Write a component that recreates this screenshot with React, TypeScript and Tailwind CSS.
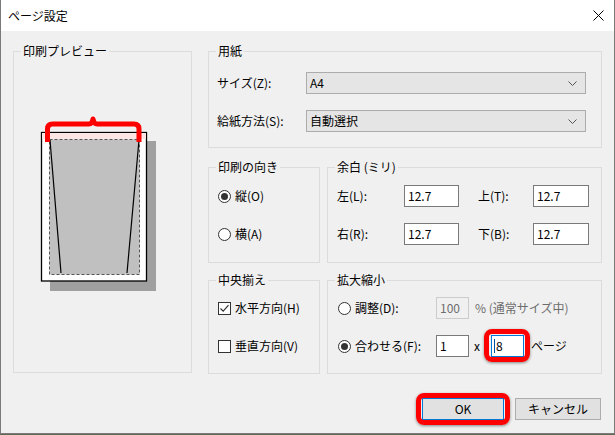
import type { ReactNode } from 'react';

function Group({ label, className, children }: { label: string; className: string; children?: ReactNode }) {
  return (
    <fieldset className={`m-0 min-w-0 border border-[#dcdcdc] p-0 ${className}`}>
      <legend className="ml-[7px] px-[2px] text-[12px] leading-[16px]">{label}</legend>
      {children}
    </fieldset>
  );
}

function Radio({ checked }: { checked?: boolean }) {
  return (
    <span className="flex h-[13px] w-[13px] shrink-0 items-center justify-center rounded-full border border-[#333333] bg-white">
      {checked && <span className="h-[7px] w-[7px] rounded-full bg-[#333333]" />}
    </span>
  );
}

function Check({ checked }: { checked?: boolean }) {
  return (
    <span className="flex h-[13px] w-[13px] shrink-0 items-center justify-center border border-[#333333] bg-white">
      {checked && (
        <svg width="11" height="11" viewBox="0 0 11 11">
          <polyline points="1.5,5.5 4.2,8.2 9.5,2.2" fill="none" stroke="#333" strokeWidth="1.2" />
        </svg>
      )}
    </span>
  );
}

function Select({ value }: { value: string }) {
  return (
    <div className="flex h-[22px] w-[280px] items-center justify-between border border-[#acacac] bg-[#e5e5e5] pl-[3px] pr-[8px]">
      <span>{value}</span>
      <svg width="9" height="5" viewBox="0 0 9 5">
        <polyline points="0.5,0.5 4.5,4.5 8.5,0.5" fill="none" stroke="#555" strokeWidth="1" />
      </svg>
    </div>
  );
}

function Field({ value, className }: { value: string; className: string }) {
  return (
    <div className={`flex h-[22px] items-center border border-[#7a7a7a] bg-white pl-[3px] ${className}`}>{value}</div>
  );
}

function Highlight({ className }: { className: string }) {
  return (
    <span
      className={`pointer-events-none absolute rounded-[8px] border-[5px] border-[#ff0000] shadow-[0_1px_3px_rgba(0,0,0,0.45)] ${className}`}
    />
  );
}

function Preview() {
  return (
    <svg className="ml-[24px] mt-[56px] block" width="122" height="180" viewBox="0 0 122 180">
      <rect x="12" y="26" width="106" height="150" fill="#a0a0a0" />
      <rect x="3.5" y="17.5" width="105" height="148.5" fill="#fff" stroke="#000" strokeWidth="1.3" />
      <rect x="4" y="18" width="104" height="6" fill="#fbe5e5" />
      <rect
        x="11.5"
        y="24.5"
        width="90"
        height="135"
        fill="#c0c0c0"
        stroke="#555"
        strokeWidth="1"
        strokeDasharray="3 2"
      />
      <line x1="12" y1="25" x2="23" y2="158" stroke="#000" strokeWidth="1.2" />
      <line x1="101" y1="25" x2="89" y2="158" stroke="#000" strokeWidth="1.2" />
      <path
        d="M9.5 27 V14 Q9.5 9 14.5 9 H51 Q54 9 55 4 Q56 9 59 9 H96 Q101 9 101 14 V27"
        fill="none"
        stroke="#ff0000"
        strokeWidth="5"
        strokeLinejoin="round"
      />
    </svg>
  );
}

export default function App() {
  return (
    <div className="h-[435px] w-[615px] bg-[#5f6a55] font-['Noto_Sans_CJK_JP',sans-serif] text-[12px] text-black">
      <div className="flex h-[434px] w-[615px] flex-col border border-t-0 border-[#7a7a7a] bg-[#f0f0f0]">
        <div className="flex h-[31px] items-center justify-between bg-white pl-[7px] pr-[10px]">
          <span className="text-[12px]">ページ設定</span>
          <svg width="11" height="11" viewBox="0 0 11 11">
            <line x1="0.5" y1="0.5" x2="10.5" y2="10.5" stroke="#000" strokeWidth="1" />
            <line x1="10.5" y1="0.5" x2="0.5" y2="10.5" stroke="#000" strokeWidth="1" />
          </svg>
        </div>

        <div className="flex gap-[16px] pl-[12px] pt-[12px]">
          <Group label="印刷プレビュー" className="h-[330px] w-[179px]">
            <Preview />
          </Group>

          <div className="flex w-[394px] flex-col">
            <Group label="用紙" className="h-[105px] w-[394px]">
              <div className="mt-[13px] flex flex-col gap-[16px] pl-[8px]">
                <div className="flex items-center">
                  <span className="w-[89px]">サイズ(Z):</span>
                  <Select value="A4" />
                </div>
                <div className="flex items-center">
                  <span className="w-[89px]">給紙方法(S):</span>
                  <Select value="自動選択" />
                </div>
              </div>
            </Group>

            <div className="mt-[11px] flex gap-[7px]">
              <Group label="印刷の向き" className="h-[104px] w-[112px]">
                <div className="mt-[10px] flex flex-col gap-[16px] pl-[9px]">
                  <div className="flex h-[22px] items-center gap-[4px]">
                    <Radio checked />
                    <span>縦(O)</span>
                  </div>
                  <div className="flex h-[22px] items-center gap-[4px]">
                    <Radio />
                    <span>横(A)</span>
                  </div>
                </div>
              </Group>
              <Group label="余白 (ミリ)" className="h-[104px] w-[275px]">
                <div className="mt-[10px] flex flex-col gap-[16px] pl-[9px]">
                  <div className="flex items-center">
                    <span className="w-[67px]">左(L):</span>
                    <Field value="12.7" className="w-[55px]" />
                    <span className="ml-[19px] w-[55px]">上(T):</span>
                    <Field value="12.7" className="w-[56px]" />
                  </div>
                  <div className="flex items-center">
                    <span className="w-[67px]">右(R):</span>
                    <Field value="12.7" className="w-[55px]" />
                    <span className="ml-[19px] w-[55px]">下(B):</span>
                    <Field value="12.7" className="w-[56px]" />
                  </div>
                </div>
              </Group>
            </div>

            <div className="mt-[9px] flex gap-[7px]">
              <Group label="中央揃え" className="h-[102px] w-[112px]">
                <div className="mt-[9px] flex flex-col gap-[16px] pl-[9px]">
                  <div className="flex h-[22px] items-center gap-[4px]">
                    <Check checked />
                    <span>水平方向(H)</span>
                  </div>
                  <div className="flex h-[22px] items-center gap-[4px]">
                    <Check />
                    <span>垂直方向(V)</span>
                  </div>
                </div>
              </Group>
              <Group label="拡大縮小" className="h-[102px] w-[275px]">
                <div className="mt-[9px] flex flex-col gap-[16px] pl-[10px]">
                  <div className="flex items-center">
                    <Radio />
                    <span className="ml-[4px] w-[81px]">調整(D):</span>
                    <div className="flex h-[22px] w-[33px] items-center border border-[#cccccc] bg-[#f0f0f0] pl-[3px] text-[#6d6d6d]">
                      100
                    </div>
                    <span className="ml-[6px] text-[#6d6d6d]">% (通常サイズ中)</span>
                  </div>
                  <div className="flex items-center">
                    <Radio checked />
                    <span className="ml-[4px] w-[81px]">合わせる(F):</span>
                    <Field value="1" className="w-[33px]" />
                    <span className="w-[22px] pl-[5px]">x</span>
                    <div className="relative">
                      <div className="flex h-[22px] w-[33px] items-center border border-[#0078d7] bg-white pl-[2px]">
                        <span className="mr-[1px] h-[14px] w-px bg-[#0050a0]" />8
                      </div>
                      <Highlight className="-bottom-[5px] -left-[7px] -right-[6px] -top-[6px]" />
                    </div>
                    <span className="ml-[7px]">ページ</span>
                  </div>
                </div>
              </Group>
            </div>

            <div className="mt-[24px] flex justify-end gap-[11px] pr-[1px]">
              <div className="relative">
                <button className="h-[22px] w-[82px] border border-[#0078d7] bg-[#e1e1e1]">OK</button>
                <Highlight className="-bottom-[5px] -left-[6px] -right-[6px] -top-[5px]" />
              </div>
              <button className="h-[22px] w-[86px] border border-[#adadad] bg-[#e1e1e1]">キャンセル</button>
            </div>
          </div>
        </div>
      </div>
    </div>
  );
}
